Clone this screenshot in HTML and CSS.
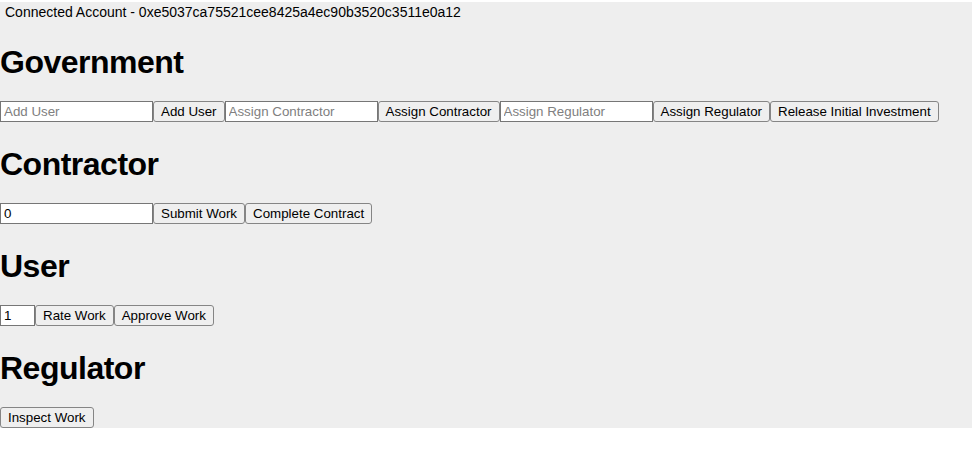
FILE: index.html
```html
<!DOCTYPE html>
<html>
<head>
<meta charset="utf-8">
<link rel="stylesheet" href="styles.css">
</head>
<body>
<div class="app">
  <div class="account">Connected Account - 0xe5037ca75521cee8425a4ec90b3520c3511e0a12</div>
  <h1>Government</h1>
  <div class="row"><input class="field" placeholder="Add User"><button>Add User</button><input class="field" placeholder="Assign Contractor"><button>Assign Contractor</button><input class="field" placeholder="Assign Regulator"><button>Assign Regulator</button><button>Release Initial Investment</button></div>
  <h1>Contractor</h1>
  <div class="row"><input class="field" value="0"><button>Submit Work</button><button>Complete Contract</button></div>
  <h1>User</h1>
  <div class="row"><input class="field small" value="1"><button>Rate Work</button><button>Approve Work</button></div>
  <h1>Regulator</h1>
  <div class="row"><button>Inspect Work</button></div>
</div>
</body>
</html>
```
FILE: styles.css
```css
html, body {
  margin: 0;
  padding: 0;
  background: #ffffff;
}
body {
  padding-top: 2px;
  font-family: "Liberation Sans", Arial, sans-serif;
  color: #000;
}
.app {
  background: #eeeeee;
  margin-right: 1px;
}
.account {
  padding: 2px 5px 0;
  font-size: 14px;
  line-height: 16px;
}
h1 {
  margin: 24px 0 20px;
  font-size: 32px;
  line-height: 37px;
  font-weight: bold;
  letter-spacing: -0.5px;
}
.row {
  display: flex;
  align-items: flex-start;
  height: 21px;
}
.field {
  box-sizing: border-box;
  width: 153px;
  height: 21px;
  margin: 0;
  padding: 1px 3px;
  border: 1px solid #767676;
  border-radius: 0;
  background: #ffffff;
  font-family: "Liberation Sans", Arial, sans-serif;
  font-size: 13.333px;
  color: #000;
  outline: none;
}
.field.small {
  width: 35px;
}
.field::placeholder {
  color: #808080;
}
button {
  box-sizing: border-box;
  height: 21px;
  margin: 0;
  padding: 0 7px;
  border: 1px solid #858585;
  border-radius: 3px;
  background: #efefef;
  font-family: "Liberation Sans", Arial, sans-serif;
  font-size: 13.333px;
  line-height: 19px;
  color: #000;
  white-space: nowrap;
}
```
